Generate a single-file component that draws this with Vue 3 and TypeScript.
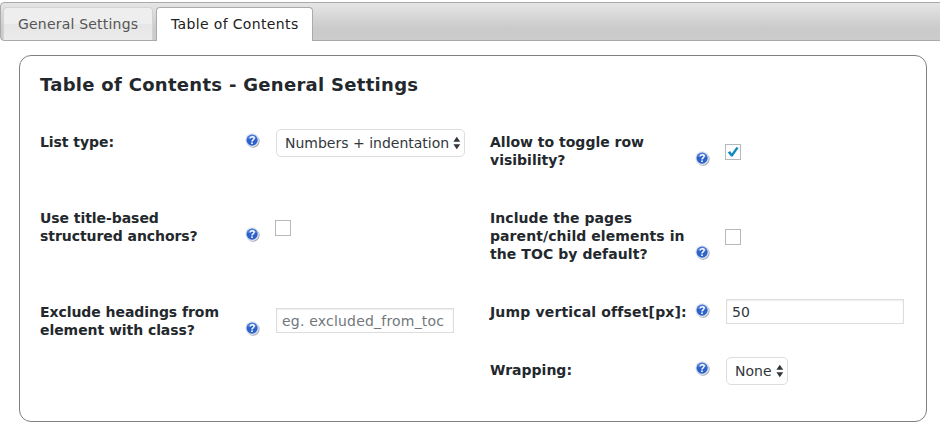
<template>
  <div class="settings">
    <ul class="tabs">
      <li
        v-for="tab in tabs"
        :key="tab"
        class="tab"
        :class="{ active: tab === activeTab }"
        @click="activeTab = tab"
      >
        <span>{{ tab }}</span>
      </li>
    </ul>

    <section class="panel">
      <h3>{{ activeTab }} - General Settings</h3>
      <div class="columns">
        <div v-for="(column, i) in columns" :key="i" class="column">
          <div v-for="field in column" :key="field.id" class="field" :class="`field-${field.id}`">
            <label :for="field.id">
              <span v-for="line in field.label" :key="line" class="line">{{ line }}</span>
            </label>
            <svg class="help" viewBox="0 0 15 15">
              <circle cx="8" cy="8.1" r="6.6" fill="#a3a6b0" />
              <circle cx="7.1" cy="7.1" r="6.8" fill="#dfe5f1" />
              <circle cx="7.1" cy="7.1" r="5.6" fill="#2c62c9" />
              <path d="M2.5 6.1a4.7 4.7 0 0 1 9.2 0q-4.6-2-9.2 0z" fill="#5e8ae0" />
              <path
                d="M5.1 5.5C5.3 3.1 9.4 3.2 9.2 5.3C9.1 6.9 7 6.7 7 8.4"
                fill="none"
                stroke="#fff"
                stroke-width="1.5"
              />
              <rect x="6.2" y="9.4" width="1.6" height="1.6" fill="#fff" />
            </svg>

            <div v-if="field.type === 'select'" class="select">
              <select :id="field.id" :class="field.id">
                <option>{{ field.value }}</option>
              </select>
              <svg class="arrows" viewBox="0 0 8 14">
                <path d="M0.4 5.8L3.8 0.8L7.2 5.8zM0.4 8.2L3.8 13.2L7.2 8.2z" fill="#32373c" />
              </svg>
            </div>
            <span v-else-if="field.type === 'checkbox'" class="check">
              <input :id="field.id" v-model="field.checked" type="checkbox" />
              <svg v-if="field.checked" class="tick" viewBox="0 0 14 14">
                <path d="M1.8 7.4L4.1 6.1L5.8 8.4L10.4 2.1L12.6 3.1L6.6 11.6H5z" fill="#0f8abf" />
              </svg>
            </span>
            <input
              v-else
              :id="field.id"
              v-model="field.value"
              type="text"
              :placeholder="field.placeholder"
            />
          </div>
        </div>
      </div>
    </section>
  </div>
</template>

<script setup lang="ts">
import { reactive, ref } from "vue";

interface Field {
  id: string;
  label: string[];
  type: "select" | "checkbox" | "text";
  value?: string;
  checked?: boolean;
  placeholder?: string;
}

const tabs = ["General Settings", "Table of Contents"];
const activeTab = ref("Table of Contents");

const columns = reactive<Field[][]>([
  [
    { id: "list-type", label: ["List type:"], type: "select", value: "Numbers + indentation" },
    { id: "anchors", label: ["Use title-based", "structured anchors?"], type: "checkbox", checked: false },
    {
      id: "exclude",
      label: ["Exclude headings from", "element with class?"],
      type: "text",
      value: "",
      placeholder: "eg. excluded_from_toc",
    },
  ],
  [
    { id: "toggle", label: ["Allow to toggle row", "visibility?"], type: "checkbox", checked: true },
    {
      id: "include",
      label: ["Include the pages", "parent/child elements in", "the TOC by default?"],
      type: "checkbox",
      checked: false,
    },
    { id: "offset", label: ["Jump vertical offset[px]:"], type: "text", value: "50" },
    { id: "wrapping", label: ["Wrapping:"], type: "select", value: "None" },
  ],
]);
</script>

<style>
body {
  margin: 0;
  background: #fff;
  overflow: hidden;
}
</style>

<style scoped>
.settings {
  height: 423px;
  padding-top: 2px;
  box-sizing: border-box;
  font-family: Verdana, "DejaVu Sans", sans-serif;
  font-size: 14px;
  color: #23282d;
}

.tabs {
  display: flex;
  gap: 3px;
  height: 39px;
  margin: 0 -5px 0 0;
  padding: 4px 0 0 2px;
  box-sizing: border-box;
  list-style: none;
  border: 1px solid #aaa;
  border-radius: 4px;
  background: linear-gradient(#e5e5e5, #cacaca 70%, #ccc);
}

.tab {
  width: 150px;
  height: 33px;
  padding-left: 14px;
  box-sizing: border-box;
  border: 1px solid #d3d3d3;
  border-bottom: 0;
  border-radius: 4px 4px 0 0;
  background: linear-gradient(#eee 50%, #e6e6e6 50%, #ebebeb);
  color: #555;
  line-height: 32px;
  letter-spacing: 0.2px;
  cursor: pointer;
}

.tab.active {
  width: 157px;
  height: 34px;
  border-color: #aaa;
  background: #fff;
  color: #212121;
  letter-spacing: 0.35px;
}

.tab span {
  white-space: nowrap;
}

.panel {
  width: 908px;
  height: 367px;
  margin: 14px 0 0 19px;
  padding: 17px 20px 0;
  box-sizing: border-box;
  border: 1px solid #808080;
  border-radius: 12px;
}

h3 {
  margin: 0;
  font-size: 18px;
  line-height: 24px;
  letter-spacing: 0.29px;
  white-space: nowrap;
}

.columns {
  display: grid;
  grid-template-columns: 450px 1fr;
  margin-top: 36px;
}

.column {
  display: grid;
  grid-template-rows: 76px 94px 58px 18px;
  align-items: start;
}

.field {
  display: flex;
  align-items: center;
}

label {
  width: 205px;
  font-weight: bold;
  line-height: 18px;
}

.field-offset label {
  letter-spacing: 0.16px;
}

.field-include label {
  letter-spacing: 0.07px;
}

.field-list-type label,
.field-anchors label,
.field-exclude label {
  letter-spacing: -0.06px;
}

.line {
  display: block;
  white-space: nowrap;
}

.help {
  align-self: flex-end;
  width: 15px;
  height: 15px;
  margin: 0 16px 3px 0;
}

.select {
  position: relative;
  margin: -4px 0 -6px;
}

select,
input {
  appearance: none;
  display: block;
  margin: 0;
  box-sizing: border-box;
  border: 1px solid #ddd;
  background: #fff;
  color: #32373c;
  font-family: inherit;
  font-size: 14px;
}

select {
  height: 28px;
  padding: 0 0 0 8px;
  border-radius: 5px;
}

.list-type {
  width: 189px;
}

.wrapping {
  width: 62px;
}

.arrows {
  position: absolute;
  top: 7px;
  right: 4px;
  width: 8px;
  height: 14px;
  pointer-events: none;
}

.check {
  position: relative;
  margin: 2px 0 0 -1px;
}

input[type="checkbox"] {
  width: 16px;
  height: 16px;
  border-color: #b4b9be;
}

.tick {
  position: absolute;
  top: 1px;
  left: 1px;
  width: 14px;
  height: 14px;
  pointer-events: none;
}

input[type="text"] {
  width: 178px;
  height: 25px;
  margin: -4px 0 -3px;
  padding: 0 5px;
  box-shadow: inset 0 1px 2px rgba(0, 0, 0, 0.07);
}

input::placeholder {
  color: #72777c;
  letter-spacing: 0.2px;
}
</style>
